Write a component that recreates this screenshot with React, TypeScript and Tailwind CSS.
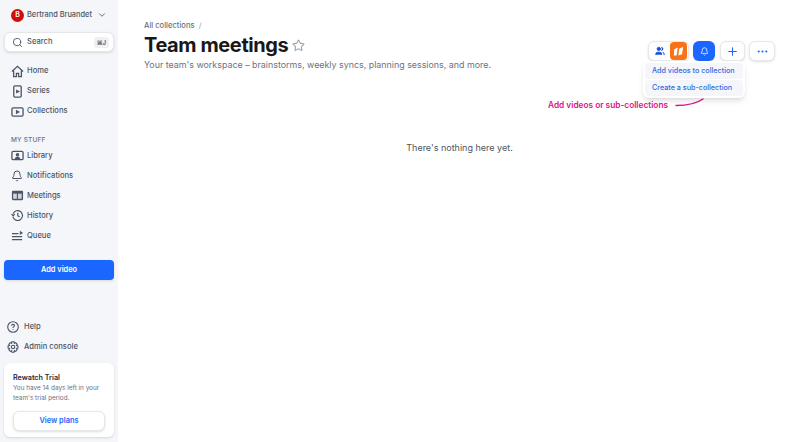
import { ChevronDown, Ellipsis, Plus, Search, Star, Bell, Users } from "lucide-react";
import type { ReactNode } from "react";

const font = { fontFamily: "Inter, sans-serif" };

function HomeIcon() {
  return (
    <svg width="13" height="13" viewBox="0 0 14 14" fill="none" stroke="#4b5563" strokeWidth="1.4">
      <path d="M1 7 7 1.5 13 7" />
      <path d="M2.8 6v6.5h3V9h2.4v3.5h3V6" />
    </svg>
  );
}

function SeriesIcon() {
  return (
    <svg width="13" height="13" viewBox="0 0 14 14" fill="none" stroke="#4b5563" strokeWidth="1.4">
      <rect x="3" y="1" width="8" height="12" rx="1.2" />
      <path d="M6.2 6 8.2 7 6.2 8Z" fill="#4b5563" />
    </svg>
  );
}

function CollectionsIcon() {
  return (
    <svg width="13" height="13" viewBox="0 0 14 14" fill="none" stroke="#4b5563" strokeWidth="1.4">
      <rect x="1" y="3" width="12" height="9" rx="1.4" />
      <path d="M6 6.3 8.2 7.5 6 8.7Z" fill="#4b5563" />
    </svg>
  );
}

function LibraryIcon() {
  return (
    <svg width="13" height="13" viewBox="0 0 14 14" fill="none" stroke="#4b5563" strokeWidth="1.4">
      <rect x="1" y="2.5" width="12" height="9" rx="1.4" />
      <circle cx="7" cy="6.3" r="1.2" fill="#4b5563" />
      <path d="M4.5 11c.4-1.6 1.3-2.3 2.5-2.3S9.100 9.400 9.500 11" fill="#4b5563" />
    </svg>
  );
}

function MeetingsIcon() {
  return (
    <svg width="13" height="13" viewBox="0 0 14 14" fill="none">
      <rect x="1" y="2" width="12" height="10" rx="1.2" fill="#4b5563" />
      <rect x="2.300" y="5" width="4" height="5.500" fill="#d1d5db" />
      <rect x="7.500" y="5" width="4" height="5.500" fill="#d1d5db" />
    </svg>
  );
}

function HistoryIcon() {
  return (
    <svg width="13" height="13" viewBox="0 0 14 14" fill="none" stroke="#4b5563" strokeWidth="1.3">
      <path d="M2.200 5A5.300 5.300 0 1 1 2 8.500" />
      <path d="M0.600 5.500 2.400 7.300 4 5.300" />
      <path d="M7.300 4v3.300l2 1.300" />
    </svg>
  );
}

function QueueIcon() {
  return (
    <svg width="13" height="13" viewBox="0 0 14 14" fill="none" stroke="#4b5563" strokeWidth="1.3">
      <path d="M1 5h7M1 8.200h11M1 11.400h11" />
      <path d="M9.500 1.800 13 4.200 9.500 6.400Z" fill="#4b5563" stroke="none" />
    </svg>
  );
}

function HelpIcon() {
  return (
    <svg width="12" height="12" viewBox="0 0 12 12" fill="none" stroke="#4b5563" strokeWidth="1.1">
      <circle cx="6" cy="6" r="5.300" />
      <path d="M4.500 4.700c.1-.9.700-1.300 1.500-1.300.9 0 1.500.5 1.500 1.200 0 1-1.500 1.100-1.500 2.300" />
      <path d="M6 8.200v.8" />
    </svg>
  );
}

function GearIcon() {
  return (
    <svg width="12" height="12" viewBox="0 0 12 12" fill="none" stroke="#4b5563" strokeWidth="1.1">
      <circle cx="6" cy="6" r="1.700" />
      <path d="M4.900.8h2.200l.3 1.500 1.300-.7 1.500 1.600-.8 1.200 1.500.5v2.200l-1.500.5.800 1.200-1.500 1.600-1.300-.7-.3 1.500H4.900l-.3-1.500-1.300.7-1.500-1.600.8-1.200-1.500-.5V4.900l1.500-.5-.8-1.200 1.500-1.600 1.300.7Z" />
    </svg>
  );
}

function BrandIcon() {
  return (
    <svg width="11" height="11" viewBox="0 0 10 10" fill="#fff">
      <path d="M1 3.200 4.300 1.300 3.300 8.700 0.800 8.700Z" />
      <path d="M5.700 2.200 9.200 1 8.200 7.500 4.900 8.700Z" />
    </svg>
  );
}

function NavRow({ icon, label }: { icon: ReactNode; label: string }) {
  return (
    <div className="flex h-5 items-center gap-[3px] pl-[6px]">
      <span className="flex w-[14px] justify-center">{icon}</span>
      <span className="text-[7.600px] font-medium text-[#4b5563]">{label}</span>
    </div>
  );
}

export default function App() {
  return (
    <div className="flex h-[442px] w-[800px] overflow-hidden bg-white" style={font}>
      <aside className="flex w-[118px] shrink-0 flex-col bg-[#f5f6fa] px-1 pb-[5px] pt-2">
        <div className="flex h-[14px] items-center whitespace-nowrap pl-[7px]">
          <span className="flex h-[13px] w-[13px] shrink-0 items-center justify-center rounded-full bg-[#d00d0d] text-[7px] font-semibold text-white">
            B
          </span>
          <span className="ml-[3px] text-[7.400px] font-medium text-[#4b5563]">Bertrand Bruandet</span>
          <ChevronDown className="ml-[5px] shrink-0 text-[#4b5563]" size={10} />
        </div>

        <div className="mt-[10px] flex h-[20px] items-center rounded-md border border-[#e5e7eb] bg-white pl-[7px] pr-[4px] shadow-sm">
          <Search size={11} className="text-[#4b5563]" />
          <span className="ml-[4px] text-[7.600px] font-medium text-[#4b5563]">Search</span>
          <span className="ml-auto rounded-[3px] bg-[#eef0f3] px-[3px] py-px text-[6px] font-semibold text-[#4b5563]">
            ⌘J
          </span>
        </div>

        <nav className="mt-[9px] flex flex-col">
          <NavRow icon={<HomeIcon />} label="Home" />
          <NavRow icon={<SeriesIcon />} label="Series" />
          <NavRow icon={<CollectionsIcon />} label="Collections" />
        </nav>

        <div className="mt-[15px] pl-[7px] text-[6.500px] font-medium tracking-wide text-[#6b7280]">MY STUFF</div>

        <nav className="flex flex-col">
          <NavRow icon={<LibraryIcon />} label="Library" />
          <NavRow icon={<Bell size={12} className="text-[#4b5563]" />} label="Notifications" />
          <NavRow icon={<MeetingsIcon />} label="Meetings" />
          <NavRow icon={<HistoryIcon />} label="History" />
          <NavRow icon={<QueueIcon />} label="Queue" />
        </nav>

        <button className="mt-[14px] h-[20px] rounded bg-[#1a66ff] text-[7.400px] font-semibold text-white shadow-sm">
          Add video
        </button>

        <div className="mt-auto flex flex-col">
          <div className="flex h-5 items-center gap-[5px] pl-[3px]">
            <HelpIcon />
            <span className="text-[7.600px] font-medium text-[#4b5563]">Help</span>
          </div>
          <div className="flex h-5 items-center gap-[5px] pl-[3px]">
            <GearIcon />
            <span className="text-[7.600px] font-medium text-[#4b5563]">Admin console</span>
          </div>

          <div className="mt-[6px] rounded-md bg-white px-[9px] pb-[6px] pt-[9px] shadow-sm">
            <div className="text-[7.200px] font-semibold leading-[11px] text-[#1f2937]">Rewatch Trial</div>
            <p className="text-[6.400px] leading-[10px] text-[#6b7280]">
              You have 14 days left in your team's trial period.
            </p>
            <button className="mt-[8px] h-[20px] w-full rounded-md border border-[#e5e7eb] bg-white text-[7.400px] font-semibold text-[#1a66ff] shadow-sm">
              View plans
            </button>
          </div>
        </div>
      </aside>

      <main className="relative flex-1 pl-[26px] pr-[25px] pt-[20px]">
        <div className="flex items-start justify-between">
          <div>
            <div className="flex items-center gap-[4px] text-[7.600px] font-medium leading-[11px] text-[#6b7280]">
              All collections <span className="font-normal text-[#9ca3af]">/</span>
            </div>
            <div className="mt-[2px] flex items-center gap-[4px]">
              <h1 className="text-[20px] font-bold leading-[24px] tracking-[-0.4px] text-[#18181b]">Team meetings</h1>
              <Star size={13} className="text-[#9ca3af]" />
            </div>
            <p className="mt-[2px] text-[8.900px] leading-[12px] text-[#6b7280]">
              Your team's workspace – brainstorms, weekly syncs, planning sessions, and more.
            </p>
          </div>

          <div className="mt-[21px] flex items-center gap-[4px]">
            <div className="flex h-[20px] w-[41px] items-center gap-[5px] rounded-md border border-[#e5e7eb] bg-white pl-[6px] shadow-sm">
              <Users size={10} className="text-[#1d4ed8]" fill="#1d4ed8" />
              <span className="flex h-[18px] w-[17px] items-center justify-center rounded bg-[#f97316]">
                <BrandIcon />
              </span>
            </div>
            <button className="flex h-[20px] w-[22px] items-center justify-center rounded-md bg-[#1a66ff] shadow-sm">
              <Bell size={9} className="text-white" />
            </button>
            <button className="ml-px flex h-[20px] w-[25px] items-center justify-center rounded-md border border-[#e5e7eb] bg-white shadow-sm">
              <Plus size={13} className="text-[#1a66ff]" />
            </button>
            <button className="flex h-[20px] w-[26px] items-center justify-center rounded-md border border-[#e5e7eb] bg-white shadow-sm">
              <Ellipsis size={13} className="text-[#1a66ff]" />
            </button>
          </div>
        </div>

        <svg className="absolute left-[556px] top-[96px]" width="32" height="12" viewBox="0 0 32 12" fill="none">
          <path d="M2 9.500C12 9.500 22 8 29 3" stroke="#e0118a" strokeWidth="1.4" strokeLinecap="round" />
        </svg>

        <div className="absolute left-[525px] top-[61px] w-[102px] rounded-md bg-white p-[2px] shadow-md">
          <div className="flex h-[16px] items-center whitespace-nowrap rounded bg-[#f5f6fa] pl-[7px] pt-px text-[7.200px] font-medium text-[#2f6ae0]">
            Add videos to collection
          </div>
          <div className="mt-px flex h-[16px] items-center whitespace-nowrap rounded bg-[#f5f6fa] pl-[7px] pt-px text-[7.200px] font-medium text-[#2f6ae0]">
            Create a sub-collection
          </div>
        </div>

        <div className="absolute left-[430px] top-[99px] whitespace-nowrap text-[8.300px] font-semibold leading-[12px] text-[#e0118a]">
          Add videos or sub-collections
        </div>

        <p className="mt-[70px] text-center text-[9px] leading-[14px] text-[#4b5563]">There's nothing here yet.</p>
      </main>
    </div>
  );
}
